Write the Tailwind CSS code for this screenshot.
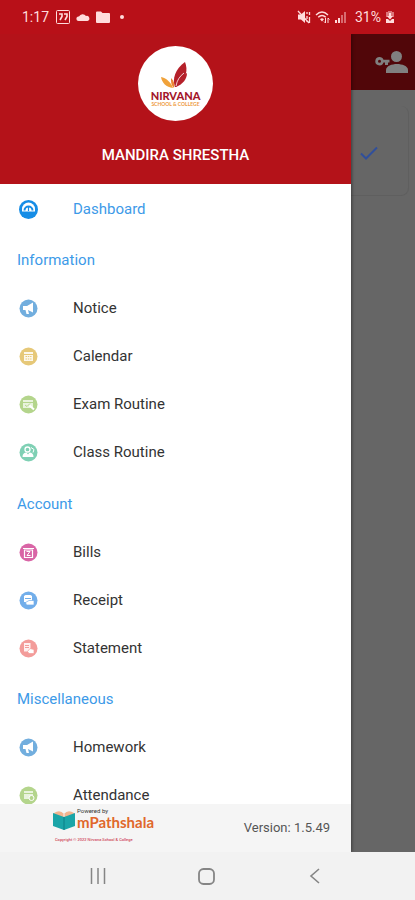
<!doctype html>
<html lang="en" class="h-full">

<head>
  <meta charset="utf-8">
  <meta name="viewport" content="width=device-width, initial-scale=1">
  <title>Nirvana School &amp; College</title>
  <script src="https://cdn.jsdelivr.net/npm/@tailwindcss/browser@4"></script>
</head>

<body class="flex h-full flex-col overflow-hidden bg-[#f2f2f2] font-[Roboto,sans-serif] text-[15px] text-[#333333]">
  <!-- status bar -->
  <div class="flex h-[34px] shrink-0 items-center justify-between bg-[#b81018] pr-5 pl-[22px] text-sm text-[#ffdcdc]">
    <div class="flex items-center gap-[6px]">
      <span>1:17</span>
      <svg class="ml-px h-[14px] w-[14px]" viewBox="0 0 14 14" fill="none" stroke="currentColor">
        <rect x=".5" y=".5" width="13" height="13" rx="1" />
        <path d="M3 4h3v2.500L4 10M8 4h3v2.500L9 10" stroke-width="1.600" />
      </svg>
      <svg class="h-[14px] w-[14px]" viewBox="0 0 14 14" fill="currentColor">
        <path d="M2.500 11a2.300 2.300 0 0 1-.5-4.500h1A4 4 0 0 1 10 6a2.500 2.500 0 0 1 1.500 5z" />
      </svg>
      <svg class="h-[14px] w-[14px]" viewBox="0 0 14 14" fill="currentColor">
        <path d="M0 2.500a1 1 0 0 1 1-1h4l1.500 1.500H13a1 1 0 0 1 1 1V12a1 1 0 0 1-1 1H1a1 1 0 0 1-1-1z" />
      </svg>
      <span class="ml-1 h-1 w-1 rounded-full bg-[#ffdcdc]"></span>
    </div>
    <div class="flex items-center gap-1">
      <svg class="h-[14px] w-[14px]" viewBox="0 0 14 14" fill="currentColor">
        <path d="M1 4.500h3L8 1v12L4 9.500H1z" />
        <path d="M1 1l11 12M10 2v2M10 6v3M12.500 2v3M12.500 7v6M10 11v1" stroke="currentColor" stroke-width="1.300" />
      </svg>
      <svg class="h-[14px] w-[15px]" viewBox="0 0 15 14" fill="none" stroke="currentColor" stroke-width="1.400">
        <path d="M1 5q6-6 12 0M3.200 7.300q3.800-3.600 7.600 0" />
        <path d="M5 9.200q2-1.800 4 0L7 11.500z" fill="currentColor" stroke="none" />
        <path d="M10.500 8v5M9 11.500l1.500 1.500M13 13V8M14.500 9.500L13 8" stroke-width="1" />
      </svg>
      <svg class="h-[14px] w-[13px]" viewBox="0 0 13 14" fill="currentColor">
        <path d="M1 10h2v3H1zM4 8h2v5H4z" />
        <path d="M7 5h2v8H7zM10 2h2v11h-2z" opacity=".45" />
      </svg>
      <span class="ml-1">31%</span>
      <svg class="h-[14px] w-[10px]" viewBox="0 0 10 14" fill="currentColor">
        <path d="M3 1h4v1h2v5H1V2h2z" opacity=".5" />
        <path d="M1 9h2l2 2 2-2h2v4H1zM4 3h2v3h2L5 9.500 2 6h2z" />
      </svg>
    </div>
  </div>

  <div class="flex min-h-0 flex-1 overflow-hidden">
    <!-- navigation drawer -->
    <aside class="z-10 flex min-w-0 flex-1 flex-col bg-white shadow-[1px_0_3px_rgba(0,0,0,0.4)]">
      <header class="flex h-[150px] shrink-0 flex-col items-center bg-[#b41219] pt-3 text-white">
        <svg class="h-[75px] w-[75px]" viewBox="0 0 75 75" role="img" aria-label="Nirvana School &amp; College">
          <circle cx="37.500" cy="37.500" r="37.500" fill="#fff" />
          <path d="M37 41c-3-8 0-18 10-25 3 8 2 16-9 25z" fill="#b5202a" />
          <path d="M38 41c2-7 6-11 11-14 0 6-4 11-11 14z" fill="#b5202a" />
          <path d="M38 40c1-6 4-10 8-13" fill="none" stroke="#fff" stroke-width=".8" />
          <path d="M35 42c-7-1-11-5-12-11 5 1 10 5 12 11z" fill="#f0a23a" />
          <path d="M36 42c-3-3-3-6-3-10 3 3 4 6 3 10z" fill="#ec8433" />
          <text x="37.500" y="54" text-anchor="middle" font-family="Lato, sans-serif" font-size="11" font-weight="900" fill="#a3162b">NIRVANA</text>
          <text x="37.500" y="60" text-anchor="middle" font-family="Lato, sans-serif" font-size="5" font-weight="700" fill="#ee9a3d">SCHOOL &amp; COLLEGE</text>
        </svg>
        <h1 class="mt-6 leading-5 font-medium">MANDIRA SHRESTHA</h1>
      </header>

      <nav class="min-h-0 flex-1 overflow-hidden pt-px">
        <a href="#" class="flex h-12 items-center gap-[35px] pl-[19px] text-[#3d9ae8]">
          <svg class="h-[19px] w-[19px]" viewBox="0 0 19 19">
            <circle cx="9.500" cy="9.500" r="9.500" fill="#168de6" />
            <path d="M3 11.500V9a6.500 6.500 0 0 1 13 0v2.500z" fill="#fff" />
            <path d="M5.500 10.500a4 4 0 0 1 8 0" fill="none" stroke="#168de6" stroke-width="2" />
            <path d="M9.500 7v4" stroke="#168de6" stroke-width="1.200" />
          </svg>
          Dashboard
        </a>

        <h2 class="flex h-[51px] items-center pt-1 pl-[17px] text-[#3d9ae8]">Information</h2>
        <a href="#" class="flex h-12 items-center gap-[35px] pl-[19px]">
          <svg class="h-[19px] w-[19px]" viewBox="0 0 19 19">
            <circle cx="9.500" cy="9.500" r="9" fill="#72aede" />
            <path d="M4 7l4 0 6-3.500v10L9 11l1 4H7.500l-1-4H4z" fill="#fff" />
          </svg>
          Notice
        </a>
        <a href="#" class="flex h-12 items-center gap-[35px] pl-[19px]">
          <svg class="h-[19px] w-[19px]" viewBox="0 0 19 19">
            <circle cx="9.500" cy="9.500" r="9" fill="#e6c878" />
            <path d="M5 5h9v2H5zM5 8h9v6H5z" fill="#fff" opacity=".85" />
            <path d="M6.500 9.500h6M6.500 12h6" stroke="#e6c878" stroke-dasharray="1.500 .8" />
          </svg>
          Calendar
        </a>
        <a href="#" class="flex h-12 items-center gap-[35px] pl-[19px]">
          <svg class="h-[19px] w-[19px]" viewBox="0 0 19 19">
            <circle cx="9.500" cy="9.500" r="9" fill="#b4d58c" />
            <path d="M4 5h10v8H4z" fill="#fff" opacity=".7" />
            <path d="M4 7.500h10M6 10l2 1.500 3-3" fill="none" stroke="#b4d58c" />
            <path d="M10.500 10.500l4.500 4" stroke="#fff" stroke-width="2" />
          </svg>
          Exam Routine
        </a>
        <a href="#" class="flex h-12 items-center gap-[35px] pl-[19px]">
          <svg class="h-[19px] w-[19px]" viewBox="0 0 19 19">
            <circle cx="9.500" cy="9.500" r="9" fill="#7fd0b4" />
            <circle cx="8.500" cy="6.500" r="2.500" fill="none" stroke="#fff" stroke-width="1.300" />
            <path d="M3.500 14c0-3 1.500-4.500 4-4.500l1.500 2 1.500-2c2.500 0 4 1.500 4 4.500z" fill="#fff" />
            <path d="M12 4.500l3 2-1 3" fill="none" stroke="#fff" />
          </svg>
          Class Routine
        </a>

        <h2 class="flex h-[52px] items-center pt-1 pl-[17px] text-[#3d9ae8]">Account</h2>
        <a href="#" class="flex h-12 items-center gap-[35px] pl-[19px]">
          <svg class="h-[19px] w-[19px]" viewBox="0 0 19 19">
            <circle cx="9.500" cy="9.500" r="9" fill="#d965a6" />
            <path d="M4 5.500h11M5.500 7v7.500h8V7z" fill="none" stroke="#fff" stroke-width="1.200" />
            <path d="M7.500 8.500h3.500l-3 4h3.500" fill="none" stroke="#fff" />
          </svg>
          Bills
        </a>
        <a href="#" class="flex h-12 items-center gap-[35px] pl-[19px]">
          <svg class="h-[19px] w-[19px]" viewBox="0 0 19 19">
            <circle cx="9.500" cy="9.500" r="9" fill="#72aeea" />
            <path d="M5 5l1.500-1h5L13 5v6H5z" fill="#fff" />
            <path d="M6 7.500h6" stroke="#72aeea" />
            <path d="M6.500 11.500L10 9.500h5v4.500H7.500z" fill="#fff" stroke="#72aeea" stroke-width=".7" />
          </svg>
          Receipt
        </a>
        <a href="#" class="flex h-12 items-center gap-[35px] pl-[19px]">
          <svg class="h-[19px] w-[19px]" viewBox="0 0 19 19">
            <circle cx="9.500" cy="9.500" r="9" fill="#f39c9a" />
            <path d="M5 4h6.500v8.500H5z" fill="#fff" opacity=".85" />
            <path d="M6 6.500h4M6 8.500h4" stroke="#f39c9a" />
            <path d="M8.500 12.500L11 9.500l4 1v4h-5z" fill="#fff" stroke="#f39c9a" stroke-width=".7" />
          </svg>
          Statement
        </a>

        <h2 class="flex h-[51px] items-center pt-1 pl-[17px] text-[#3d9ae8]">Miscellaneous</h2>
        <a href="#" class="flex h-12 items-center gap-[35px] pl-[19px]">
          <svg class="h-[19px] w-[19px]" viewBox="0 0 19 19">
            <circle cx="9.500" cy="9.500" r="9" fill="#72aede" />
            <path d="M4 7l4 0 6-3.500v10L9 11l1 4H7.500l-1-4H4z" fill="#fff" />
          </svg>
          Homework
        </a>
        <a href="#" class="flex h-12 items-center gap-[35px] pl-[19px]">
          <svg class="h-[19px] w-[19px]" viewBox="0 0 19 19">
            <circle cx="9.500" cy="9.500" r="9" fill="#b4d58c" />
            <path d="M5 5h9v8H5z" fill="#fff" opacity=".7" />
            <path d="M5 7.500h9" stroke="#b4d58c" />
            <circle cx="12.500" cy="12" r="2.500" fill="#b4d58c" stroke="#fff" />
          </svg>
          Attendance
        </a>
      </nav>

      <footer class="flex h-12 shrink-0 items-start justify-between bg-[#f5f5f5] pr-[21px] pl-[53px]">
        <div class="pt-1">
          <div class="flex items-center gap-[2px]">
            <svg class="h-[21px] w-[22px]" viewBox="0 0 22 21">
              <path d="M1 4q6-4 10 1 4-5 10-1v4H1z" fill="#f3b48f" />
              <path d="M11 5v4" stroke="#f5f5f5" />
              <path d="M0 4l11 4 11-4v13l-11 4-11-4z" fill="#1ba5a8" />
              <path d="M11 8v13" stroke="#0c7f86" />
            </svg>
            <div class="flex flex-col">
              <span class="text-[6px] leading-[6px]">Powered by</span>
              <span class="font-[Lato,sans-serif] text-[15px] leading-4 font-bold text-[#e0672b]">mPathshala</span>
            </div>
          </div>
          <p class="pt-[7px] pl-[2px] text-[4px] leading-[6px] font-medium text-[#d04a5c]">Copyright © 2022 Nirvana School &amp; College</p>
        </div>
        <span class="self-center text-[13px] text-[#555555]">Version: 1.5.49</span>
      </footer>
    </aside>

    <!-- page behind the drawer -->
    <main class="w-16 shrink-0 overflow-hidden bg-[#666666]">
      <div class="flex h-14 items-center justify-end bg-[#510609] pr-[7px]">
        <button type="button" aria-label="Account" class="text-[#808080]">
          <svg class="h-[22px] w-[33px]" viewBox="0 0 33 22" fill="currentColor">
            <circle cx="21.500" cy="5.500" r="5.500" />
            <path d="M11 22v-3c0-4 6-6 11-6s11 2 11 6v3z" />
            <path d="M4.500 6a4.200 4.200 0 1 0 4 5.500H10v2.500h3v-2.500h1.500V8.800h-6A4.200 4.200 0 0 0 4.500 6zm0 2.700a1.500 1.500 0 1 1 0 3 1.500 1.500 0 0 1 0-3z" fill-rule="evenodd" />
          </svg>
        </button>
      </div>
      <div class="mt-4 mr-[6px] flex h-[90px] items-center rounded-r-lg border-r border-b border-[#5f5f5f] pt-1 pl-[9px]">
        <svg class="h-[14px] w-[18px]" viewBox="0 0 18 14" fill="none" stroke="#304f9c" stroke-width="2">
          <path d="M1 7.500l5 5L17 1.500" />
        </svg>
      </div>
    </main>
  </div>

  <!-- system buttons -->
  <div class="flex h-12 shrink-0 items-center justify-between pr-[92px] pl-[90px] text-[#858585]">
    <button type="button" aria-label="Recent apps">
      <svg class="h-4 w-4" viewBox="0 0 16 16" stroke="currentColor" stroke-width="1.500">
        <path d="M1.500 0v16M8 0v16M14.500 0v16" />
      </svg>
    </button>
    <button type="button" aria-label="Home">
      <svg class="h-[17px] w-[17px]" viewBox="0 0 17 17" fill="none" stroke="currentColor" stroke-width="1.800">
        <rect x="1" y="1" width="15" height="15" rx="4.500" />
      </svg>
    </button>
    <button type="button" aria-label="Back">
      <svg class="h-4 w-4" viewBox="0 0 16 16" fill="none" stroke="currentColor" stroke-width="1.600">
        <path d="M12 1L4 8l8 7" />
      </svg>
    </button>
  </div>
</body>

</html>
